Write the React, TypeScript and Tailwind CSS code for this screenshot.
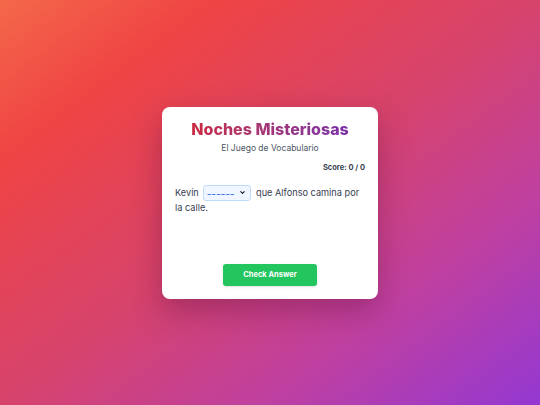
import { ChevronDown } from "lucide-react";

export default function App() {
  return (
    <div className="min-h-screen w-full flex items-center justify-center bg-[linear-gradient(to_bottom_right,#f4684a_0%,#ef4444_20%,#d6436c_50%,#bf40a0_74%,#9438d2_100%)] font-['Inter',sans-serif]">
      <div className="w-[216px] h-[192px] bg-white rounded-lg shadow-[0_12px_30px_rgba(80,10,60,0.35)] px-[13px] pt-[11px] pb-[13px] flex flex-col">
        {/* Header */}
        <h1 className="text-center text-[16px] leading-[22px] font-extrabold bg-gradient-to-r from-[#d4202f] to-[#7226b0] bg-clip-text text-transparent">
          Noches Misteriosas
        </h1>
        <p className="text-center text-[8.5px] leading-[12px] text-[#4b5563] mt-[2px]">El Juego de Vocabulario</p>

        <div className="flex justify-end mt-[9px]">
          <span className="text-[7.5px] leading-[10px] font-bold text-[#374151]">Score: 0 / 0</span>
        </div>

        {/* Question */}
        <p className="mt-[12px] text-[9.2px] leading-[14px] text-[#374151]">
          Kevin{" "}
          <span className="relative inline-flex items-center align-middle mx-[2px] w-[48px] h-[16px] rounded-[3px] border border-[#bfdbfe] bg-[#eff6ff] pl-[3px]">
            <span className="text-[#2563eb] tracking-[1.3px] text-[7px] font-bold leading-none -mt-[3px]">______</span>
            <ChevronDown className="absolute right-[4px] top-[3px] w-[7px] h-[7px] text-[#111827]" strokeWidth={3.5} />
          </span>{" "}
          que Alfonso camina por la calle.
        </p>

        {/* CTA */}
        <div className="mt-auto flex justify-center">
          <button className="w-[94px] h-[22px] rounded-[3px] bg-[#22c55e] text-white text-[7.5px] font-bold shadow-sm">
            Check Answer
          </button>
        </div>
      </div>
    </div>
  );
}
